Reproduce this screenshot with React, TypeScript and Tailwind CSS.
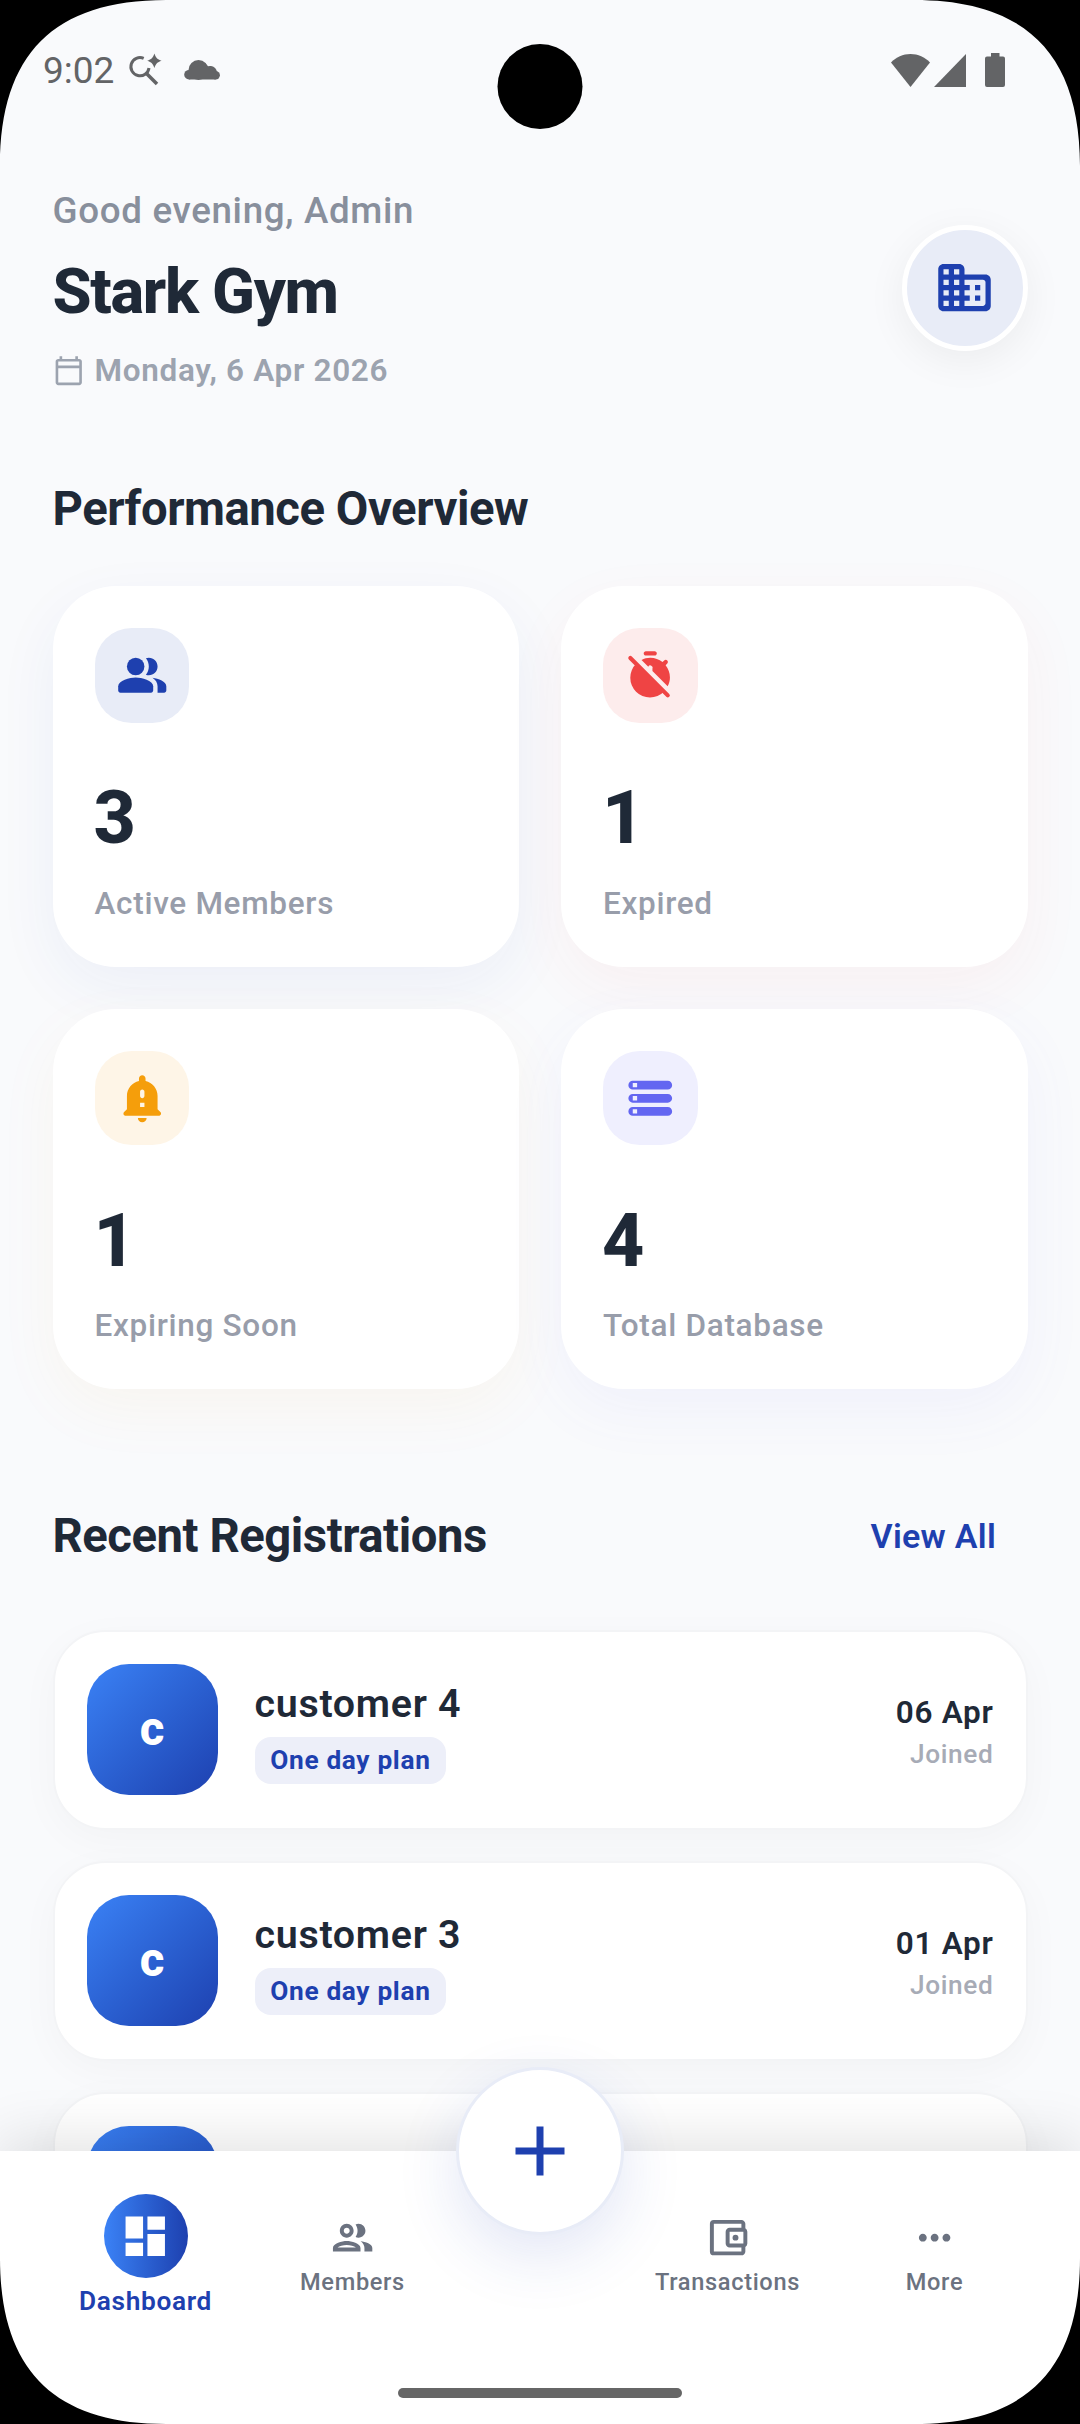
import type { ReactNode } from 'react';
import {
  MdAdd,
  MdDashboard,
  MdMoreHoriz,
  MdOutlineAccountBalanceWallet,
  MdOutlineCalendarToday,
} from 'react-icons/md';

const stats = [
  {
    label: 'Active Members',
    value: 3,
    icon: <PeopleIcon />,
    tile: 'bg-[#e8ecf7] text-[#1e40af]',
    shadow: 'shadow-[0_21px_63px_rgba(30,64,175,0.06)]',
  },
  {
    label: 'Expired',
    value: 1,
    icon: <TimerOffIcon />,
    tile: 'bg-[#fdecec] text-[#ef4444]',
    shadow: 'shadow-[0_21px_63px_rgba(239,68,68,0.05)]',
  },
  {
    label: 'Expiring Soon',
    value: 1,
    icon: <BellAlertIcon />,
    tile: 'bg-[#fef5e7] text-[#f59e0b]',
    shadow: 'shadow-[0_21px_63px_rgba(245,158,11,0.05)]',
  },
  {
    label: 'Total Database',
    value: 4,
    icon: <StorageIcon />,
    tile: 'bg-[#efeffe] text-[#6366f1]',
    shadow: 'shadow-[0_21px_63px_rgba(99,102,241,0.06)]',
  },
];

const registrations = [
  { name: 'customer 4', plan: 'One day plan', date: '06 Apr' },
  { name: 'customer 3', plan: 'One day plan', date: '01 Apr' },
  { name: 'customer 2', plan: 'One day plan', date: '01 Apr' },
];

function Glyph({ className, children }: { className: string; children: ReactNode }) {
  return (
    <svg viewBox="0 0 24 24" fill="currentColor" className={className}>
      {children}
    </svg>
  );
}

function PeopleIcon() {
  return (
    <Glyph className="size-[52.5px]">
      <circle cx="9" cy="8" r="4" />
      <path d="M9 13c-2.67 0-8 1.34-8 4v2c0 .55.45 1 1 1h14c.55 0 1-.45 1-1v-2c0-2.66-5.33-4-8-4z" />
      <path d="M15 12c2.21 0 4-1.79 4-4s-1.79-4-4-4c-.47 0-.91.1-1.33.24C14.5 5.27 15 6.58 15 8s-.5 2.73-1.33 3.76c.42.14.86.24 1.33.24z" />
      <path d="M16.67 13.13C18.04 14.06 19 15.32 19 17v3h3c.55 0 1-.45 1-1v-2c0-2.18-3.57-3.47-6.33-3.87z" />
    </Glyph>
  );
}

function TimerOffIcon() {
  return (
    <Glyph className="size-[52.5px]">
      <path d="M10 3h4c.55 0 1-.45 1-1s-.45-1-1-1h-4c-.55 0-1 .45-1 1s.45 1 1 1z" />
      <path d="M19.03 7.39l.75-.75c.38-.38.39-1.01 0-1.4l-.01-.01c-.39-.39-1.01-.38-1.4 0l-.75.75C16.07 4.74 14.12 4 12 4c-1.44 0-2.8.37-4 1.03l3.1 3.1a1 1 0 0 1 1.9.87v1.04l6.95 6.95c.67-1.19 1.05-2.55 1.05-3.99 0-2.12-.74-4.07-1.97-5.61z" />
      <path d="M5.51 6.76A9 9 0 0 0 18.24 19.49z" />
      <path d="M2.9 4.1L20 21.2" stroke="currentColor" strokeWidth="1.9" strokeLinecap="round" />
    </Glyph>
  );
}

function BellAlertIcon() {
  return (
    <Glyph className="size-[52.5px]">
      <path d="M19 17v-6c0-3.35-2.36-6.15-5.5-6.83V3c0-.83-.67-1.5-1.5-1.5s-1.5.67-1.5 1.5v1.17C7.36 4.85 5 7.65 5 11v6l-1.29 1.29c-.63.63-.19 1.71.7 1.71h15.17c.89 0 1.34-1.08.71-1.71L19 17zm-6-1h-2v-2h2v2zm0-5c0 .55-.45 1-1 1s-1-.45-1-1V9c0-.55.45-1 1-1s1 .45 1 1v2zm-1 12c1.1 0 2-.9 2-2h-4c0 1.1.9 2 2 2z" />
    </Glyph>
  );
}

function StorageIcon() {
  return (
    <Glyph className="size-[52.5px]">
      <path d="M4 20h16c1.1 0 2-.9 2-2s-.9-2-2-2H4c-1.1 0-2 .9-2 2s.9 2 2 2zm0-3h2v2H4v-2zM2 6c0 1.1.9 2 2 2h16c1.1 0 2-.9 2-2s-.9-2-2-2H4c-1.1 0-2 .9-2 2zm4 1H4V5h2v2zm-2 7h16c1.1 0 2-.9 2-2s-.9-2-2-2H4c-1.1 0-2 .9-2 2s.9 2 2 2zm0-3h2v2H4v-2z" />
    </Glyph>
  );
}

function BusinessIcon() {
  return (
    <Glyph className="size-[63px]">
      <path d="M12 7V5c0-1.1-.9-2-2-2H4c-1.1 0-2 .9-2 2v14c0 1.1.9 2 2 2h16c1.1 0 2-.9 2-2V9c0-1.1-.9-2-2-2h-8zM6 19H4v-2h2v2zm0-4H4v-2h2v2zm0-4H4V9h2v2zm0-4H4V5h2v2zm4 12H8v-2h2v2zm0-4H8v-2h2v2zm0-4H8V9h2v2zm0-4H8V5h2v2zm9 12h-7v-2h2v-2h-2v-2h2v-2h-2V9h7c.55 0 1 .45 1 1v8c0 .55-.45 1-1 1zm-1-8h-2v2h2v-2zm0 4h-2v2h2v-2z" />
    </Glyph>
  );
}

function MembersIcon() {
  return (
    <Glyph className="size-[47.25px]">
      <path d="M9 13.75c-2.34 0-7 1.17-7 3.5V19h14v-1.75c0-2.33-4.66-3.5-7-3.5zM4.34 17c.84-.58 2.87-1.25 4.66-1.25s3.82.67 4.66 1.25H4.34zM9 12c1.93 0 3.5-1.57 3.5-3.5S10.93 5 9 5 5.5 6.57 5.5 8.5 7.07 12 9 12zm0-5c.83 0 1.5.67 1.5 1.5S9.83 10 9 10s-1.5-.67-1.5-1.5S8.17 7 9 7zm7.04 6.81c1.16.84 1.96 1.96 1.96 3.44V19h4v-1.75c0-2.02-3.5-3.17-5.96-3.44zM15 12c1.93 0 3.5-1.57 3.5-3.5S16.93 5 15 5c-.54 0-1.04.13-1.5.35.63.89 1 1.98 1 3.15s-.37 2.26-1 3.15c.46.22.96.35 1.5.35z" />
    </Glyph>
  );
}

function StatusBar() {
  return (
    <div className="flex h-[140px] shrink-0 items-center justify-between pl-[43px] pr-[75px] text-[#636466]">
      <div className="flex items-center">
        <span className="w-[85px] pt-px text-[37px] leading-[44px]">9:02</span>
        <svg width="34" height="34" viewBox="0 0 34 34" fill="none" className="-mt-0.5">
          <path d="M15.7 6.4A9.1 9.1 0 1 0 21 16" stroke="currentColor" strokeWidth="3" />
          <path d="M18 21L29 32" stroke="currentColor" strokeWidth="3.6" />
          <path
            d="M26.4 1.5c1.5 4.4 2.8 5.7 7.2 7.2-4.4 1.5-5.7 2.8-7.2 7.2-1.5-4.4-2.8-5.7-7.2-7.2 4.4-1.5 5.7-2.8 7.2-7.2z"
            fill="currentColor"
          />
        </svg>
        <svg width="36" height="20" viewBox="0 0 36 20" fill="currentColor" className="ml-[22px]">
          <circle cx="14.5" cy="10" r="10" />
          <circle cx="5" cy="14.7" r="4.8" />
          <circle cx="26.5" cy="12.5" r="6.5" />
          <circle cx="31.7" cy="15.3" r="4.2" />
          <path d="M21 3l3 3.500 3-.5 6 8-1.300 5.500H5V10z" />
        </svg>
      </div>
      <div className="flex items-center">
        <svg width="39" height="33" viewBox="0 0 39 33" fill="currentColor">
          <path d="M0 8.5C5 3.2 12 0 19.5 0S34 3.2 39 8.5L19.5 33z" />
        </svg>
        <svg width="32" height="33" viewBox="0 0 32 33" fill="currentColor" className="ml-1">
          <path d="M32 0v33H0z" />
        </svg>
        <svg width="20" height="34" viewBox="0 0 20 34" fill="currentColor" className="ml-[19px]">
          <path d="M6 0h8.5v3.5H18a2 2 0 0 1 2 2V32a2 2 0 0 1-2 2H2a2 2 0 0 1-2-2V5.5a2 2 0 0 1 2-2h4z" />
        </svg>
      </div>
    </div>
  );
}

function Header() {
  return (
    <header className="flex items-start justify-between pt-[49px]">
      <div>
        <p className="text-[36.75px] font-medium leading-[44px] tracking-[0.66px] text-[#888f9c]">
          Good evening, Admin
        </p>
        <h1 className="mt-[21.5px] text-[63px] font-extrabold leading-[74px] tracking-[-1.31px] text-[#1f2937]">
          Stark Gym
        </h1>
        <div className="mt-[23px] flex items-center gap-[10.5px] text-[#9ca3af]">
          <MdOutlineCalendarToday className="size-[31.5px]" />
          <span className="text-[31.5px] font-semibold leading-[38px] tracking-[0.68px]">Monday, 6 Apr 2026</span>
        </div>
      </div>
      <div className="mt-[35.5px] flex size-[126px] items-center justify-center rounded-full border-[5px] border-white bg-[#e8ecf7] text-[#1e40af] shadow-[0_10px_40px_rgba(0,0,0,0.06)]">
        <BusinessIcon />
      </div>
    </header>
  );
}

function StatCard({ label, value, icon, tile, shadow }: (typeof stats)[number]) {
  return (
    <div className={`h-[380.5px] rounded-[63px] bg-white p-[42px] ${shadow}`}>
      <div className={`flex size-[94.5px] items-center justify-center rounded-[36.75px] ${tile}`}>{icon}</div>
      <p className="mt-[52.5px] -ml-px text-[73.5px] font-extrabold leading-[86px] text-[#1f2937]">{value}</p>
      <p className="mt-[23.5px] text-[31.5px] font-medium leading-[38px] tracking-[0.7px] text-[#989daa]">{label}</p>
    </div>
  );
}

function RegistrationRow({ name, plan, date }: (typeof registrations)[number]) {
  return (
    <li className="flex h-[199.5px] items-center rounded-[52.5px] border-[2.6px] border-[#f3f4f6] bg-white px-[32px] shadow-[0_10px_40px_rgba(0,0,0,0.03)]">
      <div className="flex size-[131px] items-center justify-center rounded-[42px] bg-linear-to-br from-[#3b82f6] to-[#1e40af] text-[47.25px] font-extrabold text-white">
        c
      </div>
      <div className="ml-[37px] flex-1 pt-[6px]">
        <p className="text-[39.4px] font-semibold leading-[46px] tracking-[0.7px] text-[#1f2937]">{name}</p>
        <span className="mt-[10px] block w-fit rounded-[16px] bg-[#edeff9] px-[15.75px] py-2 text-[26.25px] font-bold leading-[31px] tracking-[0.66px] text-[#1e40af]">
          {plan}
        </span>
      </div>
      <div className="pt-[5px] text-right">
        <p className="text-[31.5px] font-semibold leading-[38px] tracking-[0.7px] text-[#1f2937]">{date}</p>
        <p className="mt-[6px] text-[26.25px] font-medium leading-[32px] tracking-[0.66px] text-[#a7abb6]">Joined</p>
      </div>
    </li>
  );
}

function NavItem({ label, children }: { label: string; children: ReactNode }) {
  return (
    <div className="flex w-[207px] flex-col items-center pt-[62.5px] text-[#6b7280]">
      {children}
      <span className="mt-[7px] text-[23.6px] font-medium leading-[28px] tracking-[0.66px]">{label}</span>
    </div>
  );
}

function BottomNav() {
  return (
    <nav className="relative flex h-[273px] shrink-0 justify-between bg-white px-[42px] shadow-[0_-13px_52px_rgba(0,0,0,0.11)]">
      <div className="flex">
        <div className="flex w-[207px] flex-col items-center pt-[43px] text-[#1e40af]">
          <div className="flex size-[84px] items-center justify-center rounded-full bg-linear-to-r from-[#3b82f6] to-[#1e40af] text-white">
            <MdDashboard className="size-[52.5px]" />
          </div>
          <span className="mt-[8px] text-[26.25px] font-semibold leading-[31px] tracking-[0.66px]">Dashboard</span>
        </div>
        <NavItem label="Members">
          <MembersIcon />
        </NavItem>
      </div>
      <div className="flex">
        <NavItem label="Transactions">
          <MdOutlineAccountBalanceWallet className="size-[47.25px]" />
        </NavItem>
        <NavItem label="More">
          <MdMoreHoriz className="size-[47.25px]" />
        </NavItem>
      </div>

      {/* floating add button, half above the bar */}
      <button className="absolute left-1/2 top-0 flex size-[168px] -translate-x-1/2 -translate-y-1/2 items-center justify-center rounded-full border-[3px] border-[#e8ecf7] bg-white text-[#1e40af] shadow-[0_21px_63px_rgba(30,64,175,0.13)]">
        <MdAdd className="size-[84px]" />
      </button>
      {/* system gesture handle */}
      <div className="absolute bottom-[26px] left-1/2 h-[10px] w-[284px] -translate-x-1/2 rounded-full bg-[#666666]" />
    </nav>
  );
}

// Black mask for one rounded corner of the display
function Corner({ className }: { className: string }) {
  return (
    <svg width="166" height="166" viewBox="0 0 166 166" className={`absolute ${className}`}>
      <path d="M0 0H166C54 0 0 54 0 166z" fill="#000" />
    </svg>
  );
}

export default function App() {
  return (
    <div className="relative flex h-[2424px] w-[1080px] flex-col overflow-hidden bg-[#f9fafc] font-[Roboto,sans-serif]">
      <StatusBar />
      <main className="min-h-0 flex-1 px-[52.5px]">
        <Header />

        <h2 className="mt-[91px] text-[47.25px] font-bold leading-[56px] tracking-[-0.46px] text-[#1f2937]">
          Performance Overview
        </h2>
        <div className="mt-[49.5px] grid grid-cols-2 gap-[42px]">
          {stats.map((stat) => (
            <StatCard key={stat.label} {...stat} />
          ))}
        </div>

        <div className="mt-[118.5px] flex items-center justify-between pr-[31.5px]">
          <h2 className="text-[47.25px] font-bold leading-[56px] tracking-[-0.46px] text-[#1f2937]">
            Recent Registrations
          </h2>
          <a className="pt-px text-[34.1px] font-semibold leading-[40px] tracking-[0.26px] text-[#1e40af]">View All</a>
        </div>
        <ul className="mt-[66.5px] flex flex-col gap-[31.5px]">
          {registrations.map((item) => (
            <RegistrationRow key={item.name} {...item} />
          ))}
        </ul>
      </main>
      <BottomNav />

      {/* camera cutout */}
      <div className="absolute left-1/2 top-[44px] size-[85px] -translate-x-1/2 rounded-full bg-black" />
      <Corner className="left-0 top-0" />
      <Corner className="right-0 top-0 rotate-90" />
      <Corner className="bottom-0 right-0 rotate-180" />
      <Corner className="bottom-0 left-0 -rotate-90" />
    </div>
  );
}
